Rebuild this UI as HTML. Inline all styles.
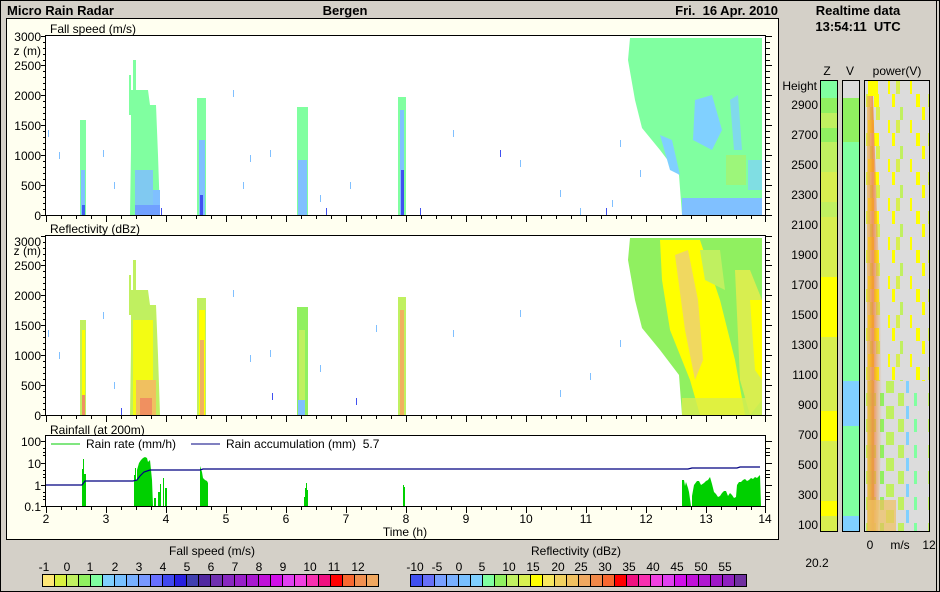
<!DOCTYPE html>
<html><head><meta charset="utf-8"><style>
html,body{margin:0;padding:0;background:#d4d0c8;}
svg{display:block;font-family:"Liberation Sans",sans-serif;}
text{font-size:12px;fill:#000;}
.b{font-weight:bold;font-size:13px;}
</style></head><body>
<svg width="940" height="592" viewBox="0 0 940 592" xmlns="http://www.w3.org/2000/svg">
<defs>
<pattern id="pw" x="866" y="81" width="62" height="39" patternUnits="userSpaceOnUse">
<rect width="62" height="39" fill="#dcdcdc"/>
<rect x="2" y="0" width="6" height="13" fill="#ffff00"/><rect x="22" y="0" width="2" height="13" fill="#ffff00"/><rect x="30" y="0" width="4" height="13" fill="#d8ee50"/><rect x="44" y="0" width="2" height="13" fill="#ffff00"/>
<rect x="0" y="13" width="4" height="13" fill="#d8ee50"/><rect x="8" y="13" width="5" height="13" fill="#ffff00"/><rect x="26" y="13" width="3" height="13" fill="#ffff00"/><rect x="50" y="13" width="4" height="13" fill="#ffff00"/>
<rect x="4" y="26" width="3" height="13" fill="#c0f060"/><rect x="10" y="26" width="4" height="13" fill="#d8ee50"/><rect x="34" y="26" width="3" height="13" fill="#c0f060"/><rect x="56" y="26" width="3" height="13" fill="#ffff00"/>
</pattern>
<pattern id="pw2" x="866" y="81" width="62" height="26" patternUnits="userSpaceOnUse">
<rect width="62" height="26" fill="#dcdcdc"/>
<rect x="0" y="0" width="10" height="13" fill="#c0f060"/><rect x="14" y="0" width="4" height="13" fill="#90f060"/><rect x="32" y="0" width="6" height="13" fill="#c0f060"/><rect x="48" y="0" width="3" height="13" fill="#80ffa0"/>
<rect x="2" y="13" width="6" height="13" fill="#d8ee50"/><rect x="20" y="13" width="8" height="13" fill="#c0f060"/><rect x="40" y="13" width="3" height="13" fill="#80d0ff"/>
</pattern>
<linearGradient id="og" x1="0" y1="0" x2="1" y2="0"><stop offset="0" stop-color="#f0b040" stop-opacity="0.6"/><stop offset="0.4" stop-color="#f08040" stop-opacity="0.8"/><stop offset="1" stop-color="#f0a040" stop-opacity="0"/></linearGradient>
</defs>
<rect width="940" height="592" fill="#d4d0c8"/>
<rect x="0.5" y="0.5" width="939" height="591" fill="none" stroke="#000"/>
<line x1="936.5" y1="0" x2="936.5" y2="592" stroke="#000"/>
<text x="7" y="15" class="b">Micro Rain Radar</text>
<text x="345" y="15" class="b" text-anchor="middle">Bergen</text>
<text x="778" y="15" class="b" text-anchor="end" xml:space="preserve">Fri.  16 Apr. 2010</text>
<text x="858" y="15" class="b" text-anchor="middle">Realtime data</text>
<text x="858" y="31" class="b" text-anchor="middle" xml:space="preserve">13:54:11  UTC</text>
<rect x="6.5" y="18.5" width="772" height="521" fill="#fffff0" stroke="#000"/>
<text x="50" y="33">Fall speed (m/s)</text>
<rect x="46" y="36" width="720" height="179" fill="#fff"/>
<g>
<polygon points="630,38 762,38 762,215 682,215 679,175 660,150 642,128 635,100 628,60" fill="#80ffa0"/>
<polygon points="695,100 712,95 722,130 712,150 693,140" fill="#80d0ff"/>
<polygon points="730,100 738,95 742,150 734,150" fill="#80d0ff" opacity="0.8"/>
<polygon points="660,135 672,140 680,175 670,170" fill="#80d0ff"/>
<rect x="682" y="198" width="80" height="17" fill="#80c0ff"/>
<rect x="726" y="155" width="20" height="30" fill="#b0f060" opacity="0.6"/>
<rect x="748" y="160" width="14" height="30" fill="#80d0ff" opacity="0.7"/>
<rect x="80" y="120" width="6" height="95" fill="#80ffa0"/><rect x="81" y="170" width="4" height="45" fill="#80c0ff"/><rect x="82" y="205" width="3" height="10" fill="#4060f0"/>
<rect x="133" y="60" width="3" height="30" fill="#80ffa0"/><rect x="129" y="75" width="2" height="40" fill="#80ffa0"/>
<polygon points="131,90 148,90 150,105 156,105 158,155 160,215 130,215 131,150" fill="#80ffa0"/>
<rect x="135" y="170" width="18" height="45" fill="#80c0ff" opacity="0.85"/><rect x="153" y="190" width="7" height="25" fill="#80c0ff"/><rect x="135" y="205" width="25" height="10" fill="#70a0ff"/>
<rect x="197" y="98" width="9" height="117" fill="#80ffa0"/><rect x="199" y="140" width="6" height="75" fill="#80c0ff"/><rect x="200" y="195" width="3" height="20" fill="#4050f0"/>
<rect x="297" y="107" width="11" height="108" fill="#80ffa0"/><rect x="298" y="160" width="9" height="55" fill="#80c0ff"/>
<rect x="398" y="97" width="8" height="118" fill="#80ffa0"/><rect x="400" y="110" width="4" height="105" fill="#80c0ff"/><rect x="401" y="170" width="3" height="45" fill="#4050f0"/>
<g fill="#80c0ff"><rect x="48" y="130" width="1" height="7"/><rect x="59" y="152" width="1" height="7"/><rect x="103" y="150" width="1" height="7"/><rect x="114" y="182" width="1" height="7"/><rect x="233" y="90" width="1" height="7"/><rect x="250" y="155" width="1" height="7"/><rect x="270" y="150" width="1" height="7"/><rect x="320" y="195" width="1" height="7"/><rect x="453" y="130" width="1" height="7"/><rect x="520" y="160" width="1" height="7"/><rect x="560" y="190" width="1" height="7"/><rect x="612" y="200" width="1" height="7"/><rect x="620" y="140" width="1" height="7"/><rect x="243" y="182" width="1" height="7"/><rect x="350" y="182" width="1" height="7"/><rect x="580" y="208" width="1" height="7"/><rect x="640" y="170" width="1" height="7"/></g>
<g fill="#4050f0"><rect x="161" y="208" width="1" height="7"/><rect x="326" y="208" width="1" height="7"/><rect x="500" y="150" width="1" height="7"/><rect x="606" y="208" width="1" height="7"/><rect x="420" y="208" width="1" height="7"/></g>
</g>
<text x="50" y="233">Reflectivity (dBz)</text>
<rect x="46" y="236" width="720" height="179" fill="#fff"/>
<g>
<polygon points="630,238 762,238 762,415 682,415 679,375 660,350 642,328 635,300 628,260" fill="#90f060"/>
<polygon points="660,240 700,240 720,300 735,360 745,415 700,415 690,380 670,330 662,280" fill="#ffff00"/>
<polygon points="675,255 688,250 698,300 703,360 695,380 685,330" fill="#f0d860"/>
<polygon points="735,270 750,270 762,300 762,400 750,415 740,380" fill="#d8ee50"/>
<polygon points="750,300 762,300 762,380 755,370" fill="#ffff00"/>
<polygon points="700,250 720,250 725,290 705,280" fill="#c0f060"/>
<rect x="682" y="398" width="80" height="17" fill="#d8ee50" opacity="0.8"/>
<rect x="80" y="320" width="6" height="95" fill="#c0f060"/><rect x="82" y="330" width="3" height="85" fill="#ffff00"/><rect x="82" y="395" width="3" height="20" fill="#f09060"/>
<rect x="133" y="260" width="3" height="30" fill="#c0f060"/><rect x="129" y="275" width="2" height="40" fill="#c0f060"/>
<polygon points="131,290 148,290 150,305 156,305 158,355 160,415 130,415 131,350" fill="#c0f060"/>
<rect x="133" y="320" width="20" height="95" fill="#ffff00" opacity="0.8"/><rect x="136" y="380" width="20" height="35" fill="#f0c060"/><rect x="140" y="398" width="12" height="17" fill="#f09060"/>
<rect x="197" y="298" width="9" height="117" fill="#c0f060"/><rect x="199" y="310" width="6" height="105" fill="#ffff00"/><rect x="200" y="340" width="4" height="75" fill="#f0b060"/>
<rect x="297" y="307" width="11" height="108" fill="#90f060"/><rect x="299" y="330" width="6" height="85" fill="#c0f060"/><rect x="298" y="400" width="7" height="15" fill="#80c0ff"/>
<rect x="398" y="297" width="8" height="118" fill="#c0f060"/><rect x="400" y="310" width="4" height="105" fill="#f0b060"/>
<g fill="#80c0ff"><rect x="48" y="330" width="1" height="7"/><rect x="59" y="352" width="1" height="7"/><rect x="103" y="312" width="1" height="7"/><rect x="114" y="382" width="1" height="7"/><rect x="233" y="290" width="1" height="7"/><rect x="250" y="355" width="1" height="7"/><rect x="270" y="350" width="1" height="7"/><rect x="320" y="365" width="1" height="7"/><rect x="453" y="330" width="1" height="7"/><rect x="520" y="310" width="1" height="7"/><rect x="560" y="390" width="1" height="7"/><rect x="590" y="373" width="1" height="7"/><rect x="620" y="340" width="1" height="7"/><rect x="376" y="325" width="1" height="7"/></g>
<g fill="#4050f0"><rect x="121" y="408" width="1" height="7"/><rect x="272" y="393" width="1" height="7"/><rect x="356" y="398" width="1" height="7"/></g>
</g>
<text x="50" y="434">Rainfall (at 200m)</text>
<rect x="46" y="436" width="720" height="70" fill="#fff"/>
<line x1="51" y1="444" x2="80" y2="444" stroke="#00cc00"/>
<text x="86" y="448">Rain rate (mm/h)</text>
<line x1="191" y1="444" x2="220" y2="444" stroke="#000080"/>
<text x="226" y="448" xml:space="preserve">Rain accumulation (mm)  5.7</text>
<g fill="#00d000">
<rect x="82" y="469" width="1" height="37"/><rect x="83" y="459" width="1" height="47"/><rect x="84" y="474" width="2" height="32"/>
<rect x="134" y="475" width="1" height="31"/><rect x="135" y="468" width="1" height="38"/><rect x="136" y="480" width="1" height="26"/>
<polygon points="137,506 137,470 139,463 141,460 143,458 145,457 147,458 148,462 150,460 151,470 152,480 153,506"/>
<rect x="154" y="498" width="2" height="8"/><rect x="158" y="492" width="2" height="14"/><rect x="160" y="484" width="1" height="22"/><rect x="163" y="478" width="1" height="28"/><rect x="165" y="488" width="2" height="18"/>
<polygon points="200,506 200,466 202,472 203,478 205,480 207,481 208,483 208,506"/>
<rect x="304" y="497" width="1" height="9"/><rect x="305" y="488" width="1" height="18"/><rect x="306" y="483" width="1" height="23"/><rect x="307" y="490" width="1" height="16"/>
<rect x="403" y="485" width="1" height="21"/><rect x="404" y="487" width="1" height="19"/>
<polygon points="682,506 682,480 684,480 685,486 686,482 688,488 689,492 691,506 692,506 692,496 694,485 697,481 699,481 701,485 704,483 706,481 708,480 710,477 712,484 714,492 716,494 718,497 720,496 722,493 724,491 726,491 728,496 730,493 732,495 734,498 736,497 737,485 739,482 741,482 743,480 745,479 747,481 749,480 751,478 753,479 755,477 757,478 759,476 760,475 761,506"/>
</g>
<polyline points="46,485 82,485 85,481 133,481 137,480 140,476 144,472 150,470 200,470 203,469 688,469 692,468 737,468 740,467 760,467" fill="none" stroke="#000080" stroke-width="1.2"/>
<g fill="none" stroke="#000" stroke-width="1">
<rect x="45.5" y="35.5" width="720" height="180"/>
<rect x="45.5" y="235.5" width="720" height="180"/>
<rect x="45.5" y="435.5" width="720" height="71"/>
</g>
<g stroke="#000" stroke-width="1">
<path id="yt" d="M41,36.5h4M41,215.5h4M41,185.5h4M41,155.5h4M41,125.5h4M41,95.5h4M41,65.5h4M43,42.5h2M43,48.5h2M43,54.5h2M43,60.5h2M43,71.5h2M43,77.5h2M43,83.5h2M43,89.5h2M43,101.5h2M43,107.5h2M43,113.5h2M43,119.5h2M43,131.5h2M43,137.5h2M43,143.5h2M43,149.5h2M43,161.5h2M43,167.5h2M43,173.5h2M43,179.5h2M43,191.5h2M43,197.5h2M43,203.5h2M43,209.5h2"/>
<use href="#yt" y="200"/>
<path id="ytr" d="M766,36.5h6M766,65.5h6M766,95.5h6M766,125.5h6M766,155.5h6M766,185.5h6M766,215.5h6M766,42.5h4M766,48.5h4M766,54.5h4M766,60.5h4M766,71.5h4M766,77.5h4M766,83.5h4M766,89.5h4M766,101.5h4M766,107.5h4M766,113.5h4M766,119.5h4M766,131.5h4M766,137.5h4M766,143.5h4M766,149.5h4M766,161.5h4M766,167.5h4M766,173.5h4M766,179.5h4M766,191.5h4M766,197.5h4M766,203.5h4M766,209.5h4"/>
<use href="#ytr" y="200"/>
<path id="xt" d="M46.5,216v6M106.5,216v6M166.5,216v6M226.5,216v6M286.5,216v6M346.5,216v6M406.5,216v6M466.5,216v6M526.5,216v6M586.5,216v6M646.5,216v6M706.5,216v6M765.5,216v6M61.5,216v3M76.5,216v3M91.5,216v3M121.5,216v3M136.5,216v3M151.5,216v3M181.5,216v3M196.5,216v3M211.5,216v3M241.5,216v3M256.5,216v3M271.5,216v3M301.5,216v3M316.5,216v3M331.5,216v3M361.5,216v3M376.5,216v3M391.5,216v3M421.5,216v3M436.5,216v3M451.5,216v3M481.5,216v3M496.5,216v3M511.5,216v3M541.5,216v3M556.5,216v3M571.5,216v3M601.5,216v3M616.5,216v3M631.5,216v3M661.5,216v3M676.5,216v3M691.5,216v3M721.5,216v3M736.5,216v3M751.5,216v3"/>
<use href="#xt" y="200"/>
<use href="#xt" y="291"/>
<path d="M41,441.5h5M41,463.5h5M41,485.5h5M41,506.5h5M43,448.5h3M43,452.5h3M43,455.5h3M43,470.5h3M43,474.5h3M43,477.5h3M43,492.5h3M43,496.5h3M43,499.5h3M766,441.5h6M766,463.5h6M766,485.5h6M766,448.5h4M766,452.5h4M766,455.5h4M766,470.5h4M766,474.5h4M766,477.5h4M766,492.5h4M766,496.5h4M766,499.5h4"/>
</g>
<g text-anchor="end">
<text x="41" y="41">3000</text><text x="41" y="55">z (m)</text><text x="41" y="70">2500</text><text x="41" y="100">2000</text><text x="41" y="130">1500</text><text x="41" y="160">1000</text><text x="41" y="190">500</text><text x="41" y="220">0</text>
<text x="41" y="246">3000</text><text x="41" y="255">z (m)</text><text x="41" y="270">2500</text><text x="41" y="300">2000</text><text x="41" y="330">1500</text><text x="41" y="360">1000</text><text x="41" y="390">500</text><text x="41" y="420">0</text>
<text x="41" y="446">100</text><text x="41" y="468">10</text><text x="41" y="490">1</text><text x="41" y="511">0.1</text>
</g>
<g text-anchor="middle">
<text x="46" y="523">2</text><text x="106" y="523">3</text><text x="166" y="523">4</text><text x="226" y="523">5</text><text x="286" y="523">6</text><text x="346" y="523">7</text><text x="406" y="523">8</text><text x="466" y="523">9</text><text x="526" y="523">10</text><text x="586" y="523">11</text><text x="646" y="523">12</text><text x="706" y="523">13</text><text x="765" y="523">14</text>
<text x="405" y="536">Time (h)</text>
</g>
<text x="212" y="555" text-anchor="middle">Fall speed (m/s)</text>
<text x="576" y="555" text-anchor="middle">Reflectivity (dBz)</text>
<g text-anchor="middle">
<text x="44" y="571">-1</text><text x="67" y="571">0</text><text x="90" y="571">1</text><text x="115" y="571">2</text><text x="139" y="571">3</text><text x="163" y="571">4</text><text x="187" y="571">5</text><text x="211" y="571">6</text><text x="235" y="571">7</text><text x="259" y="571">8</text><text x="283" y="571">9</text><text x="310" y="571">10</text><text x="334" y="571">11</text><text x="358" y="571">12</text>
<text x="415" y="571">-10</text><text x="437" y="571">-5</text><text x="459" y="571">0</text><text x="482" y="571">5</text><text x="509" y="571">10</text><text x="533" y="571">15</text><text x="558" y="571">20</text><text x="581" y="571">25</text><text x="605" y="571">30</text><text x="629" y="571">35</text><text x="653" y="571">40</text><text x="677" y="571">45</text><text x="701" y="571">50</text><text x="725" y="571">55</text>
</g>
<g stroke="#000" stroke-width="1">
<rect x="42.5" y="574.5" width="12" height="12" fill="#ffe878"/><rect x="54.5" y="574.5" width="12" height="12" fill="#d8f040"/><rect x="66.5" y="574.5" width="12" height="12" fill="#c0f060"/><rect x="78.5" y="574.5" width="12" height="12" fill="#90f060"/><rect x="90.5" y="574.5" width="12" height="12" fill="#80ffa0"/><rect x="102.5" y="574.5" width="12" height="12" fill="#80d0ff"/><rect x="114.5" y="574.5" width="12" height="12" fill="#78c0ff"/><rect x="126.5" y="574.5" width="12" height="12" fill="#78b0ff"/><rect x="138.5" y="574.5" width="12" height="12" fill="#7898ff"/><rect x="150.5" y="574.5" width="12" height="12" fill="#6870ff"/><rect x="162.5" y="574.5" width="12" height="12" fill="#4048f0"/><rect x="174.5" y="574.5" width="12" height="12" fill="#2820e0"/><rect x="186.5" y="574.5" width="12" height="12" fill="#4040b0"/><rect x="198.5" y="574.5" width="12" height="12" fill="#5028a0"/><rect x="210.5" y="574.5" width="12" height="12" fill="#7030b0"/><rect x="222.5" y="574.5" width="12" height="12" fill="#8828c0"/><rect x="234.5" y="574.5" width="12" height="12" fill="#9820c8"/><rect x="246.5" y="574.5" width="12" height="12" fill="#a818d0"/><rect x="258.5" y="574.5" width="12" height="12" fill="#c010d8"/><rect x="270.5" y="574.5" width="12" height="12" fill="#d010e8"/><rect x="282.5" y="574.5" width="12" height="12" fill="#e040f0"/><rect x="294.5" y="574.5" width="12" height="12" fill="#f040e0"/><rect x="306.5" y="574.5" width="12" height="12" fill="#f830b0"/><rect x="318.5" y="574.5" width="12" height="12" fill="#f01080"/><rect x="330.5" y="574.5" width="12" height="12" fill="#ff0000"/><rect x="342.5" y="574.5" width="12" height="12" fill="#f86830"/><rect x="354.5" y="574.5" width="12" height="12" fill="#f09050"/><rect x="366.5" y="574.5" width="12" height="12" fill="#f0a860"/>
<rect x="410.5" y="574.5" width="12" height="12" fill="#4050f0"/><rect x="422.5" y="574.5" width="12" height="12" fill="#6870f8"/><rect x="434.5" y="574.5" width="12" height="12" fill="#78a0ff"/><rect x="446.5" y="574.5" width="12" height="12" fill="#78b0ff"/><rect x="458.5" y="574.5" width="12" height="12" fill="#78c0ff"/><rect x="470.5" y="574.5" width="12" height="12" fill="#80d0ff"/><rect x="482.5" y="574.5" width="12" height="12" fill="#80ffa0"/><rect x="494.5" y="574.5" width="12" height="12" fill="#90f060"/><rect x="506.5" y="574.5" width="12" height="12" fill="#c0f060"/><rect x="518.5" y="574.5" width="12" height="12" fill="#d8f050"/><rect x="530.5" y="574.5" width="12" height="12" fill="#ffff00"/><rect x="542.5" y="574.5" width="12" height="12" fill="#f8e860"/><rect x="554.5" y="574.5" width="12" height="12" fill="#f0d060"/><rect x="566.5" y="574.5" width="12" height="12" fill="#f0c060"/><rect x="578.5" y="574.5" width="12" height="12" fill="#f0a860"/><rect x="590.5" y="574.5" width="12" height="12" fill="#f08848"/><rect x="602.5" y="574.5" width="12" height="12" fill="#f86830"/><rect x="614.5" y="574.5" width="12" height="12" fill="#ff0000"/><rect x="626.5" y="574.5" width="12" height="12" fill="#f01080"/><rect x="638.5" y="574.5" width="12" height="12" fill="#f830b0"/><rect x="650.5" y="574.5" width="12" height="12" fill="#f040e0"/><rect x="662.5" y="574.5" width="12" height="12" fill="#e040f0"/><rect x="674.5" y="574.5" width="12" height="12" fill="#d010e8"/><rect x="686.5" y="574.5" width="12" height="12" fill="#c010d8"/><rect x="698.5" y="574.5" width="12" height="12" fill="#b018d0"/><rect x="710.5" y="574.5" width="12" height="12" fill="#a018c8"/><rect x="722.5" y="574.5" width="12" height="12" fill="#9020c0"/><rect x="734.5" y="574.5" width="12" height="12" fill="#7030a0"/>
</g>
<text x="827" y="75" text-anchor="middle">Z</text>
<text x="850" y="75" text-anchor="middle">V</text>
<text x="897" y="75" text-anchor="middle">power(V)</text>
<text x="817" y="90" text-anchor="end">Height</text>
<g text-anchor="end">
<text x="818" y="109">2900</text><text x="818" y="139">2700</text><text x="818" y="169">2500</text><text x="818" y="199">2300</text><text x="818" y="229">2100</text><text x="818" y="259">1900</text><text x="818" y="289">1700</text><text x="818" y="319">1500</text><text x="818" y="349">1300</text><text x="818" y="379">1100</text><text x="818" y="409">900</text><text x="818" y="439">700</text><text x="818" y="469">500</text><text x="818" y="499">300</text><text x="818" y="529">100</text>
</g>
<g>
<rect x="821" y="81" width="16" height="17" fill="#80ffa0"/><rect x="821" y="98" width="16" height="15" fill="#90f060"/><rect x="821" y="113" width="16" height="15" fill="#c0f060"/><rect x="821" y="128" width="16" height="14" fill="#90f060"/><rect x="821" y="142" width="16" height="30" fill="#c0f060"/><rect x="821" y="172" width="16" height="30" fill="#d8ee50"/><rect x="821" y="202" width="16" height="15" fill="#c0f060"/><rect x="821" y="217" width="16" height="60" fill="#d8ee50"/><rect x="821" y="277" width="16" height="60" fill="#ffff00"/><rect x="821" y="337" width="16" height="74" fill="#d8ee50"/><rect x="821" y="411" width="16" height="30" fill="#ffff00"/><rect x="821" y="441" width="16" height="60" fill="#d8ee50"/><rect x="821" y="501" width="16" height="15" fill="#ffff00"/><rect x="821" y="516" width="16" height="15" fill="#d8ee50"/>
<rect x="843" y="81" width="16" height="17" fill="#dcdcdc"/><rect x="843" y="98" width="16" height="44" fill="#90f060"/><rect x="843" y="142" width="16" height="239" fill="#80ffa0"/><rect x="843" y="381" width="16" height="45" fill="#80d0ff"/><rect x="843" y="426" width="16" height="90" fill="#80ffa0"/><rect x="843" y="516" width="16" height="15" fill="#80d0ff"/>
<rect x="865" y="81" width="64" height="300" fill="url(#pw)"/>
<rect x="865" y="381" width="64" height="150" fill="url(#pw2)"/>
<rect x="868" y="81" width="10" height="15" fill="#ffff00"/>
<polygon points="867,96 873,96 880,300 882,420 878,531 867,531" fill="url(#og)"/>
<rect x="868" y="500" width="28" height="31" fill="#f0c060" opacity="0.7"/>
</g>
<g fill="none" stroke="#000"><rect x="820.5" y="80.5" width="17" height="451"/><rect x="842.5" y="80.5" width="17" height="451"/><rect x="864.5" y="80.5" width="65" height="451"/></g>
<text x="870" y="549" text-anchor="middle">0</text>
<text x="900" y="549" text-anchor="middle">m/s</text>
<text x="929" y="549" text-anchor="middle">12</text>
<text x="817" y="567" text-anchor="middle">20.2</text>
</svg>
</body></html>
